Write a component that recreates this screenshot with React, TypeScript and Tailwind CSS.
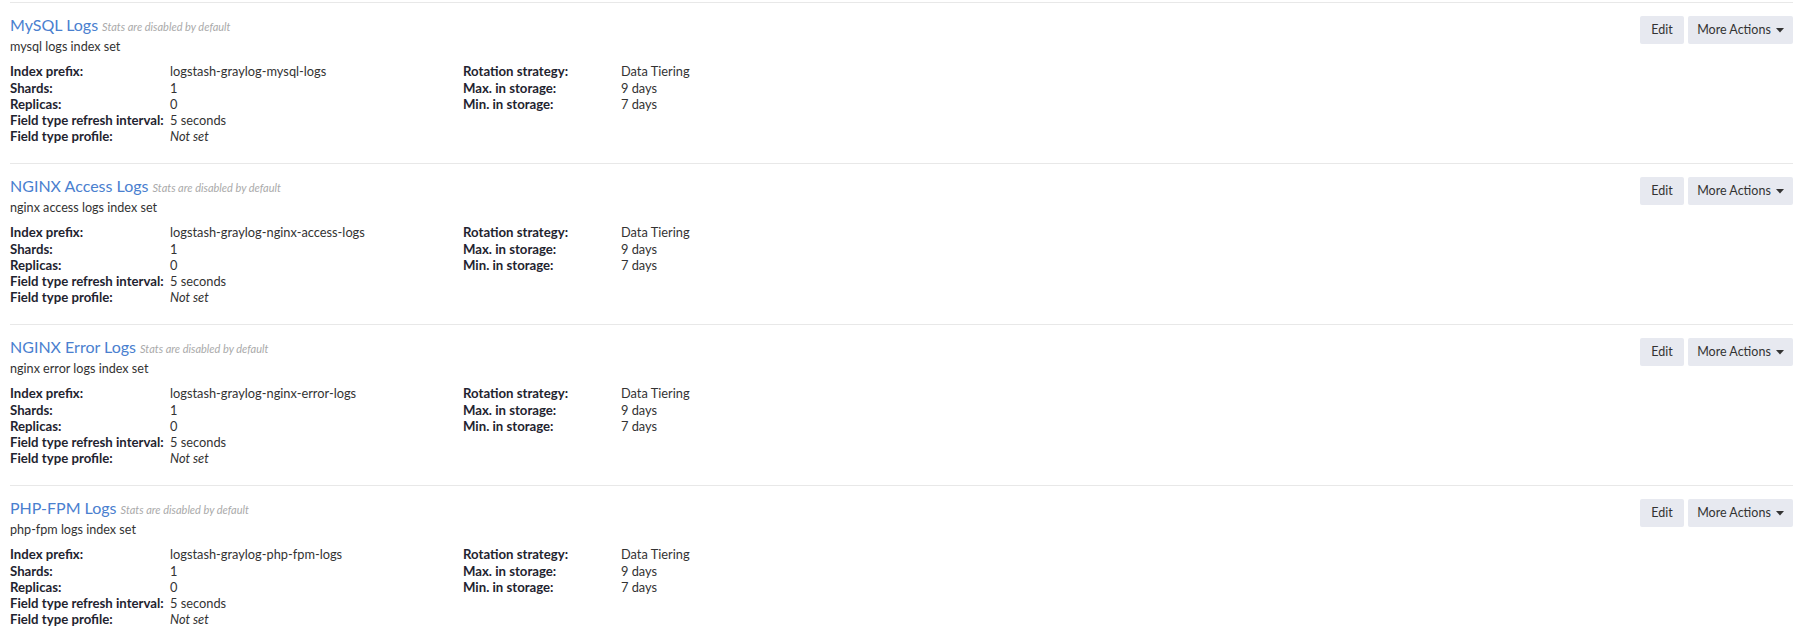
import React from "react";

const indexSets = [
  { title: "MySQL Logs", description: "mysql logs index set", prefix: "logstash-graylog-mysql-logs" },
  { title: "NGINX Access Logs", description: "nginx access logs index set", prefix: "logstash-graylog-nginx-access-logs" },
  { title: "NGINX Error Logs", description: "nginx error logs index set", prefix: "logstash-graylog-nginx-error-logs" },
  { title: "PHP-FPM Logs", description: "php-fpm logs index set", prefix: "logstash-graylog-php-fpm-logs" },
];

function Row({ label, value, labelWidth, italic }: { label: string; value: string; labelWidth: string; italic?: boolean }) {
  return (
    <div className="flex h-[16.25px] leading-[16.25px]">
      <div className={`${labelWidth} shrink-0 font-bold text-[13.2px] text-[#1f2430]`}>{label}</div>
      <div className={italic ? "italic text-[#333]" : "text-[#333]"}>{value}</div>
    </div>
  );
}

export default function App() {
  return (
    <main
      className="min-h-screen bg-white px-[10px] pt-[2px] pr-[8px]"
      style={{ fontFamily: "Lato, 'Open Sans', sans-serif" }}
    >
      {indexSets.map((set) => (
        <section key={set.title} className="h-[161px] border-t border-[#e8e8e8] flex justify-between">
          <div className="pt-[12px]">
            {/* title */}
            <div className="flex items-baseline h-[20px] leading-[20px]">
              <a className="text-[16px] text-[#4a80cf] cursor-pointer">{set.title}</a>
              <span className="ml-[4px] text-[11px] italic text-[#aaaaaa]">Stats are disabled by default</span>
            </div>
            <div className="mt-[4px] text-[12.6px] leading-[16.3px] text-[#333]">{set.description}</div>

            <div className="mt-[8px] flex text-[12.8px]">
              <div className="w-[453px]">
                <Row label="Index prefix:" value={set.prefix} labelWidth="w-[160px]" />
                <Row label="Shards:" value="1" labelWidth="w-[160px]" />
                <Row label="Replicas:" value="0" labelWidth="w-[160px]" />
                <Row label="Field type refresh interval:" value="5 seconds" labelWidth="w-[160px]" />
                <Row label="Field type profile:" value="Not set" labelWidth="w-[160px]" italic />
              </div>
              <div>
                <Row label="Rotation strategy:" value="Data Tiering" labelWidth="w-[158px]" />
                <Row label="Max. in storage:" value="9 days" labelWidth="w-[158px]" />
                <Row label="Min. in storage:" value="7 days" labelWidth="w-[158px]" />
              </div>
            </div>
          </div>

          {/* buttons */}
          <div className="mt-[13px] flex gap-[4px] h-[28px]">
            <button className="w-[44px] h-[28px] bg-[#e7e9f0] text-[12.5px] text-[#333] rounded-[2px]">Edit</button>
            <button className="w-[105px] h-[28px] bg-[#e7e9f0] text-[12.5px] text-[#333] rounded-[2px] flex items-center justify-center gap-[5px]">
              More Actions
              <svg width="8" height="5" viewBox="0 0 8 5">
                <path d="M0 0 L8 0 L4 4.5 Z" fill="#333" />
              </svg>
            </button>
          </div>
        </section>
      ))}
    </main>
  );
}
